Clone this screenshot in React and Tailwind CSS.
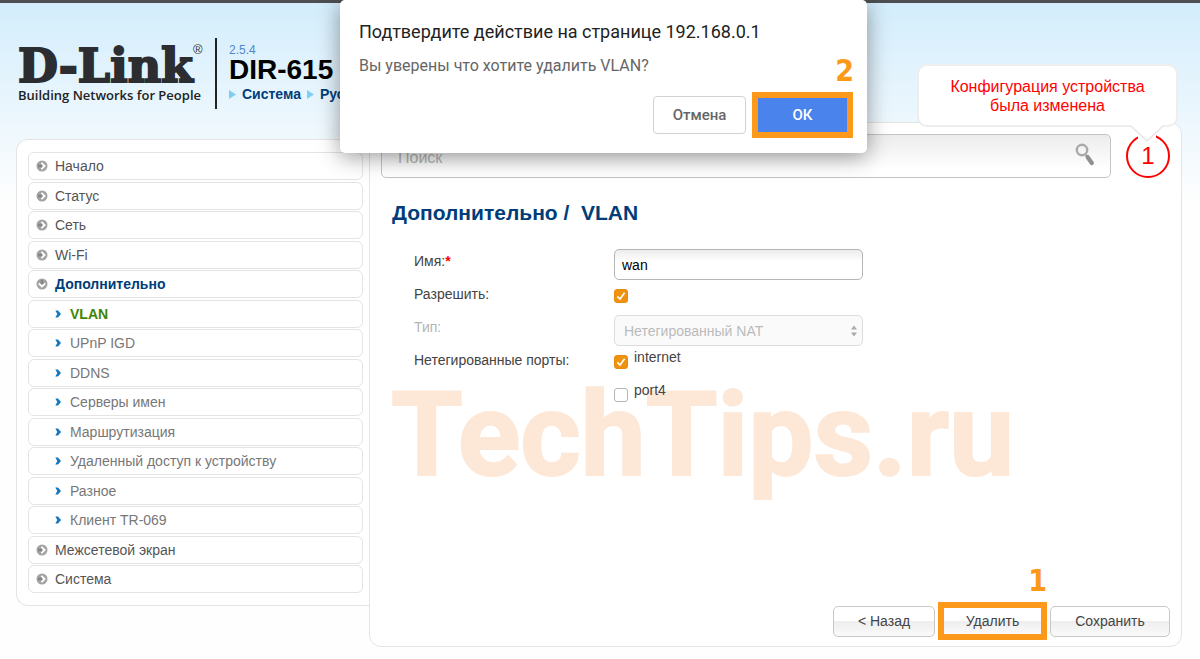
import React, { useState } from 'react';

const menuItems = [
  { label: 'Начало' },
  { label: 'Статус' },
  { label: 'Сеть' },
  { label: 'Wi-Fi' },
  { label: 'Дополнительно', open: true },
  { label: 'VLAN', sub: true, active: true },
  { label: 'UPnP IGD', sub: true },
  { label: 'DDNS', sub: true },
  { label: 'Серверы имен', sub: true },
  { label: 'Маршрутизация', sub: true },
  { label: 'Удаленный доступ к устройству', sub: true },
  { label: 'Разное', sub: true },
  { label: 'Клиент TR-069', sub: true },
  { label: 'Межсетевой экран' },
  { label: 'Система' },
];

const GroupIcon = ({ open }) => (
  <svg width="12" height="12" viewBox="0 0 12 12" className={open ? 'rotate-90' : ''}>
    <circle cx="6" cy="6" r="5.5" fill="#a3a3a3" />
    <path d="M5.4 2.8 L8.6 6 L5.4 9.2" fill="none" stroke="#fff" strokeWidth="1.8" />
    <path d="M2 6 H6" stroke="#858585" strokeWidth="2.5" />
  </svg>
);

const SubIcon = () => (
  <svg width="6" height="8" viewBox="0 0 6 8">
    <path d="M0.3 0.5 H3 L6 4 L3 7.5 H0.3 L2.3 4 Z" fill="#1478bf" />
  </svg>
);

const CrumbArrow = () => (
  <svg width="7" height="9" viewBox="0 0 7 9">
    <path d="M0 0 L7 4.5 L0 9 Z" fill="#82cdf2" />
  </svg>
);

const MenuItem = ({ label, sub, active, open }) => {
  let text = 'text-[#555]';
  if (sub) text = 'text-[#777]';
  if (open) text = 'font-bold text-[#003d79]';
  if (active) text = 'font-bold text-[#3f8500]';

  return (
    <li>
      <a
        href="#"
        className={`flex h-7 items-center rounded-md border border-[#e4e4e4] bg-white text-[14px] ${text} ${
          sub ? 'gap-[9px] pl-[26px]' : 'gap-[7px] pl-[7px]'
        }`}
      >
        {sub ? <SubIcon /> : <GroupIcon open={open} />}
        <span className="pt-px">{label}</span>
      </a>
    </li>
  );
};

const Checkbox = ({ id, checked, onChange }) => (
  <span className="relative mt-[7px] block h-[14px] w-[14px] shrink-0">
    <input
      id={id}
      type="checkbox"
      checked={checked}
      onChange={(e) => onChange(e.target.checked)}
      className="block h-[14px] w-[14px] appearance-none rounded-[3px] border border-[#b5b5b5] bg-white checked:border-[#e88a0c] checked:bg-[#f0920f]"
    />
    {checked && (
      <svg className="pointer-events-none absolute inset-0" width="14" height="14" viewBox="0 0 14 14">
        <path d="M3.3 7.4 L6 10 L10.6 3.8" fill="none" stroke="#fff" strokeWidth="1.6" />
      </svg>
    )}
  </span>
);

const Header = () => (
  <header className="flex h-[119px] items-start pl-[18px] pt-[35px]">
    <div className="w-[197px] pt-[5px]">
      <div className="flex items-start">
        <span className="font-['DejaVu_Serif'] text-[46px] leading-[46px] font-bold text-[#2c2d30] [-webkit-text-stroke:2px_#2c2d30]">
          D-Link
        </span>
        <span className="text-[13px] leading-[14px] text-[#333]">®</span>
      </div>
      <p className="font-['Open_Sans'] text-[13px] leading-[12px] font-semibold whitespace-nowrap text-[#222]">
        Building Networks for People
      </p>
    </div>
    <div className="h-[71px] border-l-2 border-[#222] pl-3">
      <p className="pt-1 text-[12px] leading-[16px] text-[#4f87cf]">2.5.4</p>
      <p className="text-[28px] leading-[24px] font-bold text-black">DIR-615</p>
      <nav className="mt-1 flex items-center gap-[6px] text-[14px] leading-[16px] font-bold text-[#003d79]">
        <CrumbArrow />
        <a href="#">Система</a>
        <CrumbArrow />
        <a href="#">Русский</a>
      </nav>
    </div>
  </header>
);

const Notice = () => (
  <div className="relative">
    <button
      type="button"
      className="block h-11 w-11 rounded-full border-[2px] border-[#f00] text-[24px] leading-10 text-[#f00]"
    >
      1
    </button>
    <div className="absolute -right-2 bottom-[51px] flex h-[63px] w-[261px] items-center justify-center rounded-[10px] border-2 border-[#eee] bg-white px-6 text-center text-[16px] leading-[19px] text-[#f00]">
      <p>Конфигурация устройства была изменена</p>
      <svg className="absolute right-3 top-[58px]" width="34" height="20" viewBox="0 0 34 20">
        <path d="M0 0 L2 2.5 L8 8 V16 H26 V8 L32 2.5 L34 0 Z" fill="#fff" />
        <path d="M1 2 L17 17 L33 2" fill="#fff" stroke="#e6e6e6" strokeWidth="1.5" />
      </svg>
    </div>
  </div>
);

const formButton =
  'h-[31px] rounded-[5px] border border-[#c8c8c8] bg-linear-to-b from-white from-50% via-[#eee] via-50% to-[#fafafa] text-[14px] text-[#444]';

const VlanForm = () => {
  const [name, setName] = useState('wan');
  const [enabled, setEnabled] = useState(true);
  const [ports, setPorts] = useState({ internet: true, port4: false });

  return (
    <div className="relative mt-[22px] grid grid-cols-[200px_249px] auto-rows-[33px] pl-[33px] text-[14px] leading-6 text-[#444]">
      <label htmlFor="name">
        Имя:<span className="font-bold text-[#f00]">*</span>
      </label>
      <input
        id="name"
        type="text"
        value={name}
        onChange={(e) => setName(e.target.value)}
        className="h-[31px] rounded-[5px] border border-[#b5b5b5] bg-linear-to-b from-[#ececec] to-white to-40% px-[7px] text-black"
      />

      <label htmlFor="enabled">Разрешить:</label>
      <Checkbox id="enabled" checked={enabled} onChange={setEnabled} />

      <label htmlFor="type" className="text-[#b5b5b5]">Тип:</label>
      <div className="relative">
        <select
          id="type"
          disabled
          className="block h-[31px] w-full appearance-none rounded-[5px] border border-[#ddd] bg-[#fafafa] px-[9px] text-[#bbb] opacity-100"
        >
          <option>Нетегированный NAT</option>
        </select>
        <svg className="pointer-events-none absolute right-[6px] top-[10px]" width="6" height="12" viewBox="0 0 6 12">
          <path d="M0 4.5 L3 0.5 L6 4.5 Z M0 7.5 L3 11.5 L6 7.5 Z" fill="#aaa" />
        </svg>
      </div>

      <span>Нетегированные порты:</span>
      <div>
        {Object.keys(ports).map((port) => (
          <div key={port} className="flex h-[33px] items-start gap-[6px]">
            <Checkbox
              id={port}
              checked={ports[port]}
              onChange={(value) => setPorts({ ...ports, [port]: value })}
            />
            <label htmlFor={port} className="leading-[18px]">{port}</label>
          </div>
        ))}
      </div>
    </div>
  );
};

const ConfirmDialog = () => (
  <div
    role="dialog"
    aria-labelledby="dialog-title"
    className="absolute left-[340px] -top-[3px] h-[153px] w-[527px] rounded-[5px] bg-white pl-[19px] pr-[14px] font-[Roboto] shadow-[0_4px_22px_rgba(0,0,0,0.4)]"
  >
    <h2 id="dialog-title" className="pt-5 text-[18px] leading-6 text-[#222]">
      Подтвердите действие на странице 192.168.0.1
    </h2>
    <p className="mt-3 text-[16px] leading-5 text-[#666]">Вы уверены что хотите удалить VLAN?</p>
    <div className="mt-4 flex items-center justify-end gap-[6px]">
      <button
        type="button"
        className="h-[38px] w-[93px] rounded-[4px] border border-[#d2d2d2] text-[15px] font-medium text-[#666]"
      >
        Отмена
      </button>
      <button
        type="button"
        className="h-[46px] w-[101px] border-[6px] border-[#fc981a] bg-[#4a83ec] text-[15px] font-medium text-white"
      >
        ОК
      </button>
    </div>
    <span className="absolute right-[13px] top-[56px] font-['DejaVu_Sans_Condensed'] text-[30px] leading-[30px] font-bold text-[#fc981a]">
      2
    </span>
  </div>
);

const App = () => {
  return (
    <div className="relative min-h-screen border-t-[3px] border-[#4d4f52] bg-linear-to-b from-[#d3edfc] to-[#fefefe] to-[200px] font-['Liberation_Sans',sans-serif]">
      <Header />

      <div className="flex items-start pl-4 pr-[18px]">
        <aside className="mt-[17px] w-[353px] rounded-l-xl border border-r-0 border-[#e4e4e4] bg-white py-3 pl-[11px] pr-[6px]">
          <ul className="flex min-h-[441px] flex-col justify-between">
            {menuItems.map((item) => (
              <MenuItem key={item.label} {...item} />
            ))}
          </ul>
        </aside>

        <main className="relative flex min-h-[525px] flex-1 flex-col rounded-xl rounded-tl-none border border-[#e4e4e4] bg-white px-[11px] pb-[6px] pt-[11px]">
          <div className="flex items-center justify-between gap-[15px]">
            <div className="relative flex-1">
              <input
                type="search"
                aria-label="Поиск"
                placeholder="Поиск"
                className="block h-11 w-full rounded-[5px] border border-[#c4c4c4] bg-linear-to-b from-[#ececec] to-white to-80% px-4 pt-[3px] text-[16px] placeholder:text-[#b5b5b5]"
              />
              <svg className="absolute right-4 top-[9px]" width="20" height="24" viewBox="0 0 20 24">
                <circle cx="7" cy="7" r="5.2" fill="none" stroke="#aaa" strokeWidth="2.4" />
                <path d="M10.2 11 L12 13.2" stroke="#aaa" strokeWidth="1.6" />
                <path d="M12.5 14 L16.8 20" stroke="#8f8f8f" strokeWidth="4.2" strokeLinecap="round" />
              </svg>
            </div>
            <Notice />
          </div>

          <span className="pointer-events-none absolute left-[21px] top-[242px] font-[Roboto] text-[116px] leading-[140px] font-bold text-[#fde8d8] [-webkit-text-stroke:2px_#fde8d8]">
            TechTips.ru
          </span>

          <h1 className="mt-[21px] whitespace-pre pl-[11px] text-[21px] leading-7 font-bold text-[#003d79]">
            {'Дополнительно /  VLAN'}
          </h1>

          <VlanForm />

          <div className="mt-auto flex items-center justify-end gap-[3px]">
            <button type="button" className={`${formButton} w-[102px]`}>&lt; Назад</button>
            <div className="relative">
              <button
                type="button"
                className="block h-[38px] w-[109px] border-[6px] border-[#fc981a] bg-linear-to-b from-white from-50% via-[#eee] via-50% to-[#fafafa] text-[14px] text-[#444]"
              >
                Удалить
              </button>
              <span className="absolute -top-9 right-0 font-['DejaVu_Sans_Condensed'] text-[30px] leading-[30px] font-bold text-[#fc981a]">
                1
              </span>
            </div>
            <button type="button" className={`${formButton} w-[120px]`}>Сохранить</button>
          </div>
        </main>
      </div>

      <ConfirmDialog />
    </div>
  );
};

export default App;
